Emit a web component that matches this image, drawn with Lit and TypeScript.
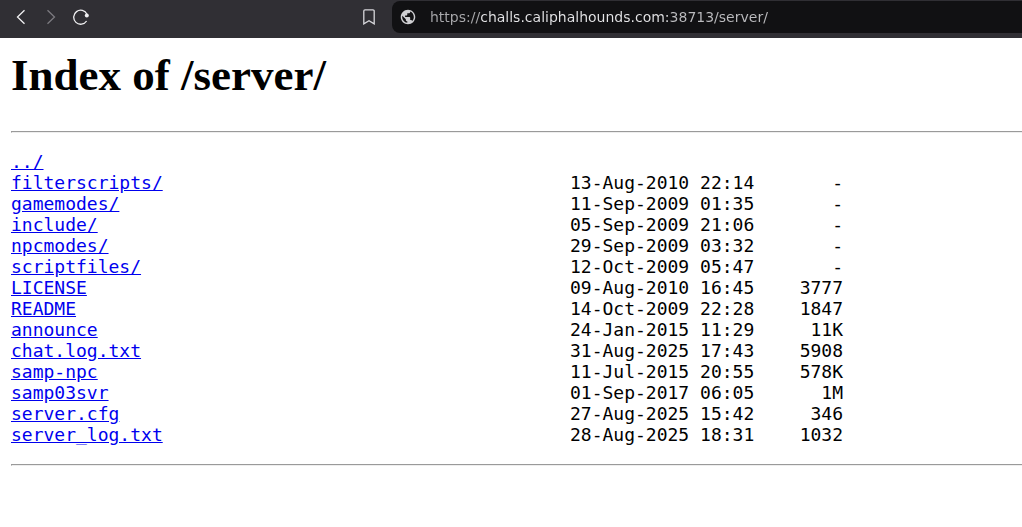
import { LitElement, html, css } from "lit";
import { customElement, property } from "lit/decorators.js";

interface Entry {
  name: string;
  date?: string;
  size?: string;
}

const ENTRIES: Entry[] = [
  { name: "../" },
  { name: "filterscripts/", date: "13-Aug-2010 22:14", size: "-" },
  { name: "gamemodes/", date: "11-Sep-2009 01:35", size: "-" },
  { name: "include/", date: "05-Sep-2009 21:06", size: "-" },
  { name: "npcmodes/", date: "29-Sep-2009 03:32", size: "-" },
  { name: "scriptfiles/", date: "12-Oct-2009 05:47", size: "-" },
  { name: "LICENSE", date: "09-Aug-2010 16:45", size: "3777" },
  { name: "README", date: "14-Oct-2009 22:28", size: "1847" },
  { name: "announce", date: "24-Jan-2015 11:29", size: "11K" },
  { name: "chat.log.txt", date: "31-Aug-2025 17:43", size: "5908" },
  { name: "samp-npc", date: "11-Jul-2015 20:55", size: "578K" },
  { name: "samp03svr", date: "01-Sep-2017 06:05", size: "1M" },
  { name: "server.cfg", date: "27-Aug-2025 15:42", size: "346" },
  { name: "server_log.txt", date: "28-Aug-2025 18:31", size: "1032" },
];

@customElement("browser-bar")
export class BrowserBar extends LitElement {
  @property() url = "";

  static styles = css`
    :host {
      display: block;
      background: #302f34;
    }
    .bar {
      display: flex;
      align-items: center;
      height: 38px;
      box-sizing: border-box;
      padding: 1px 0 5px 6px;
    }
    button {
      display: flex;
      flex: none;
      align-items: center;
      justify-content: center;
      width: 30px;
      height: 30px;
      padding: 0;
      border: 0;
      background: none;
      color: #f0f0f2;
    }
    button:disabled {
      color: #7c7b80;
    }
    svg {
      display: block;
      width: 16px;
      height: 16px;
      fill: none;
      stroke: currentColor;
      stroke-width: 1.3;
    }
    .bookmark {
      margin-left: 258px;
      color: #d6d6da;
    }
    .address {
      display: flex;
      flex: 1;
      align-items: center;
      min-width: 0;
      height: 32px;
      margin-left: 8px;
      padding-left: 8px;
      gap: 14px;
      border-radius: 8px 0 0 8px;
      background: #111113;
    }
    .globe {
      flex: none;
      fill: #cfcfd2;
      stroke: none;
    }
    input {
      flex: 1;
      min-width: 0;
      height: 24px;
      padding: 0;
      border: 0;
      outline: 0;
      font: 14px/20px "DejaVu Sans", sans-serif;
      color: transparent;
      background: linear-gradient(
        90deg,
        #a9a9ac 50px,
        #e6e6e8 50px,
        #e6e6e8 238px,
        #bcbcbf 238px
      );
      background-clip: text;
      -webkit-background-clip: text;
    }
  `;

  render() {
    return html`
      <nav class="bar" aria-label="Browser">
        <button type="button" aria-label="Back">
          <svg viewBox="0 0 16 16"><path d="M11.5 1.2 4.5 8l7 6.8" /></svg>
        </button>
        <button type="button" aria-label="Forward" disabled>
          <svg viewBox="0 0 16 16"><path d="m4.5 1.2 7 6.8-7 6.8" /></svg>
        </button>
        <button type="button" aria-label="Reload">
          <svg viewBox="0 0 16 16">
            <path d="M14 5.2A7 7 0 1 0 13.6 12" />
            <circle cx="13.8" cy="6.4" r="2" fill="currentColor" stroke="none" />
          </svg>
        </button>
        <button class="bookmark" type="button" aria-label="Bookmark this page">
          <svg viewBox="0 0 16 16">
            <path d="M4 .9h8a1.2 1.2 0 0 1 1.2 1.2v12.8L8 11.7l-5.2 3.2V2.1A1.2 1.2 0 0 1 4 .9Z" />
          </svg>
        </button>
        <div class="address">
          <svg class="globe" viewBox="1 1 22 22" aria-hidden="true">
            <path
              d="M12 2C6.48 2 2 6.48 2 12s4.48 10 10 10 10-4.48 10-10S17.52 2 12 2zm-1 17.93c-3.95-.49-7-3.85-7-7.93 0-.62.08-1.21.21-1.79L9 15v1c0 1.1.9 2 2 2v1.93zm6.9-2.54c-.26-.81-1-1.39-1.9-1.39h-1v-3c0-.55-.45-1-1-1H8v-2h2c.55 0 1-.45 1-1V7h2c1.1 0 2-.9 2-2v-.41c2.93 1.19 5 4.06 5 7.41 0 2.08-.8 3.97-2.1 5.39z"
            />
          </svg>
          <input type="text" aria-label="Address" spellcheck="false" .value=${this.url} />
        </div>
      </nav>
    `;
  }
}

@customElement("app-root")
export class AppRoot extends LitElement {
  static styles = css`
    :host {
      display: block;
      min-height: 100vh;
      background: #fff;
      color: #000;
    }
    main {
      padding: 11px 0 11px 11px;
    }
    h1 {
      margin: 0 0 30px;
      font: bold 45px/52px "Liberation Serif", serif;
    }
    hr {
      margin: 0;
      border: 1px solid;
      border-color: #9a9a9a #eee #eee #9a9a9a;
      border-right: 0;
    }
    table {
      margin: 18px 0 19px;
      border-collapse: collapse;
      table-layout: fixed;
      font: 18px/21px "DejaVu Sans Mono", monospace;
      white-space: pre;
    }
    td {
      padding: 0;
      height: 21px;
    }
    .name {
      width: 559px;
    }
    .date {
      width: 186px;
    }
    .size {
      width: 87px;
      text-align: right;
    }
    a {
      color: #00e;
      text-decoration: underline;
    }
  `;

  render() {
    return html`
      <browser-bar url="https://challs.caliphalhounds.com:38713/server/"></browser-bar>
      <main>
        <h1>Index of /server/</h1>
        <hr />
        <table>
          <tbody>
            ${ENTRIES.map(
              (entry) => html`<tr>
                <td class="name"><a href="#${entry.name}">${entry.name}</a></td>
                <td class="date">${entry.date}</td>
                <td class="size">${entry.size}</td>
              </tr>`
            )}
          </tbody>
        </table>
        <hr />
      </main>
    `;
  }
}
